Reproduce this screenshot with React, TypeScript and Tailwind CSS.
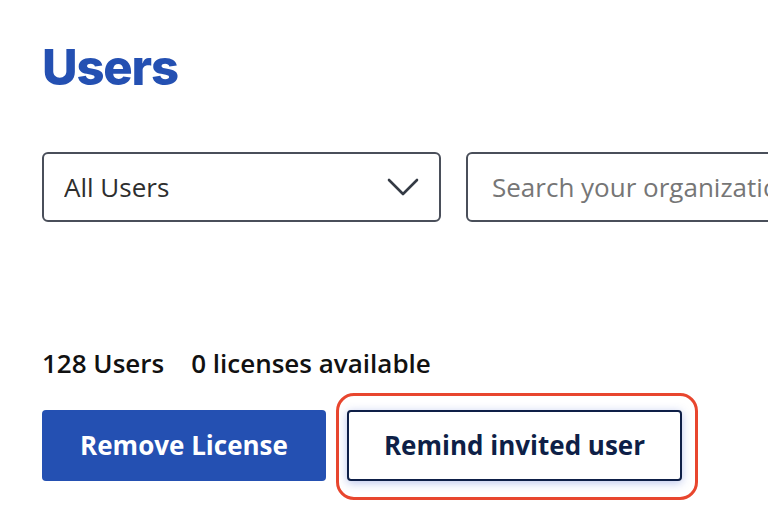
import { useState } from 'react';

export default function App() {
  const [filter, setFilter] = useState('All Users');
  const [query, setQuery] = useState('');

  return (
    <div className="min-h-[532px] w-full overflow-hidden bg-white font-['Open_Sans',sans-serif] text-[#1a1a1a]">
      <div className="pl-[42px] pt-[38px]">
        <h1 className="font-['Inter',sans-serif] text-[49px] font-extrabold leading-[60px] tracking-[-1.2px] text-[#2450b2]">
          Users
        </h1>

        {/* Filters */}
        <div className="mt-[54px] flex gap-[25px]">
          <div className="relative h-[70px] w-[399px] shrink-0">
            <select
              value={filter}
              onChange={(e) => setFilter(e.target.value)}
              className="h-full w-full appearance-none rounded-[6px] border-2 border-[#4a4f5a] bg-white pl-[20px] text-[26px] text-[#2e2e2e] outline-none"
            >
              <option>All Users</option>
              <option>Licensed Users</option>
              <option>Invited Users</option>
            </select>
            <svg
              className="pointer-events-none absolute right-[22px] top-[26px] h-[18px] w-[32px]"
              viewBox="0 0 32 18"
              fill="none"
              stroke="#343a44"
              strokeWidth={2.6}
              strokeLinecap="round"
              strokeLinejoin="round"
            >
              <path d="M2 2l14 14L30 2" />
            </svg>
          </div>
          <input
            value={query}
            onChange={(e) => setQuery(e.target.value)}
            placeholder="Search your organization"
            className="h-[70px] w-[420px] shrink-0 rounded-[6px] border-2 border-[#4a4f5a] bg-white pl-[24px] text-[26px] text-[#2e2e2e] outline-none placeholder:text-[#767676]"
          />
        </div>

        {/* Stats */}
        <div className="mt-[124px] flex gap-[27px] text-[26px] font-semibold leading-[34px] text-[#111]">
          <span>128 Users</span>
          <span>0 licenses available</span>
        </div>

        {/* Actions */}
        <div className="mt-[30px] flex gap-[21px]">
          <button className="h-[71px] w-[284px] rounded-[4px] bg-[#2450b2] text-[26px] font-bold text-white">
            Remove License
          </button>
          <div className="relative">
            <div className="pointer-events-none absolute -bottom-[19px] -left-[11px] -right-[16px] -top-[17px] rounded-[18px] border-[3.5px] border-[#e8462e]" />
            <button className="relative h-[71px] w-[335px] rounded-[4px] border-2 border-[#0e1f47] bg-white text-[26px] font-bold text-[#0e1f47] shadow-[0_2px_10px_rgba(60,90,200,0.35)]">
              Remind invited user
            </button>
          </div>
        </div>
      </div>
    </div>
  );
}
